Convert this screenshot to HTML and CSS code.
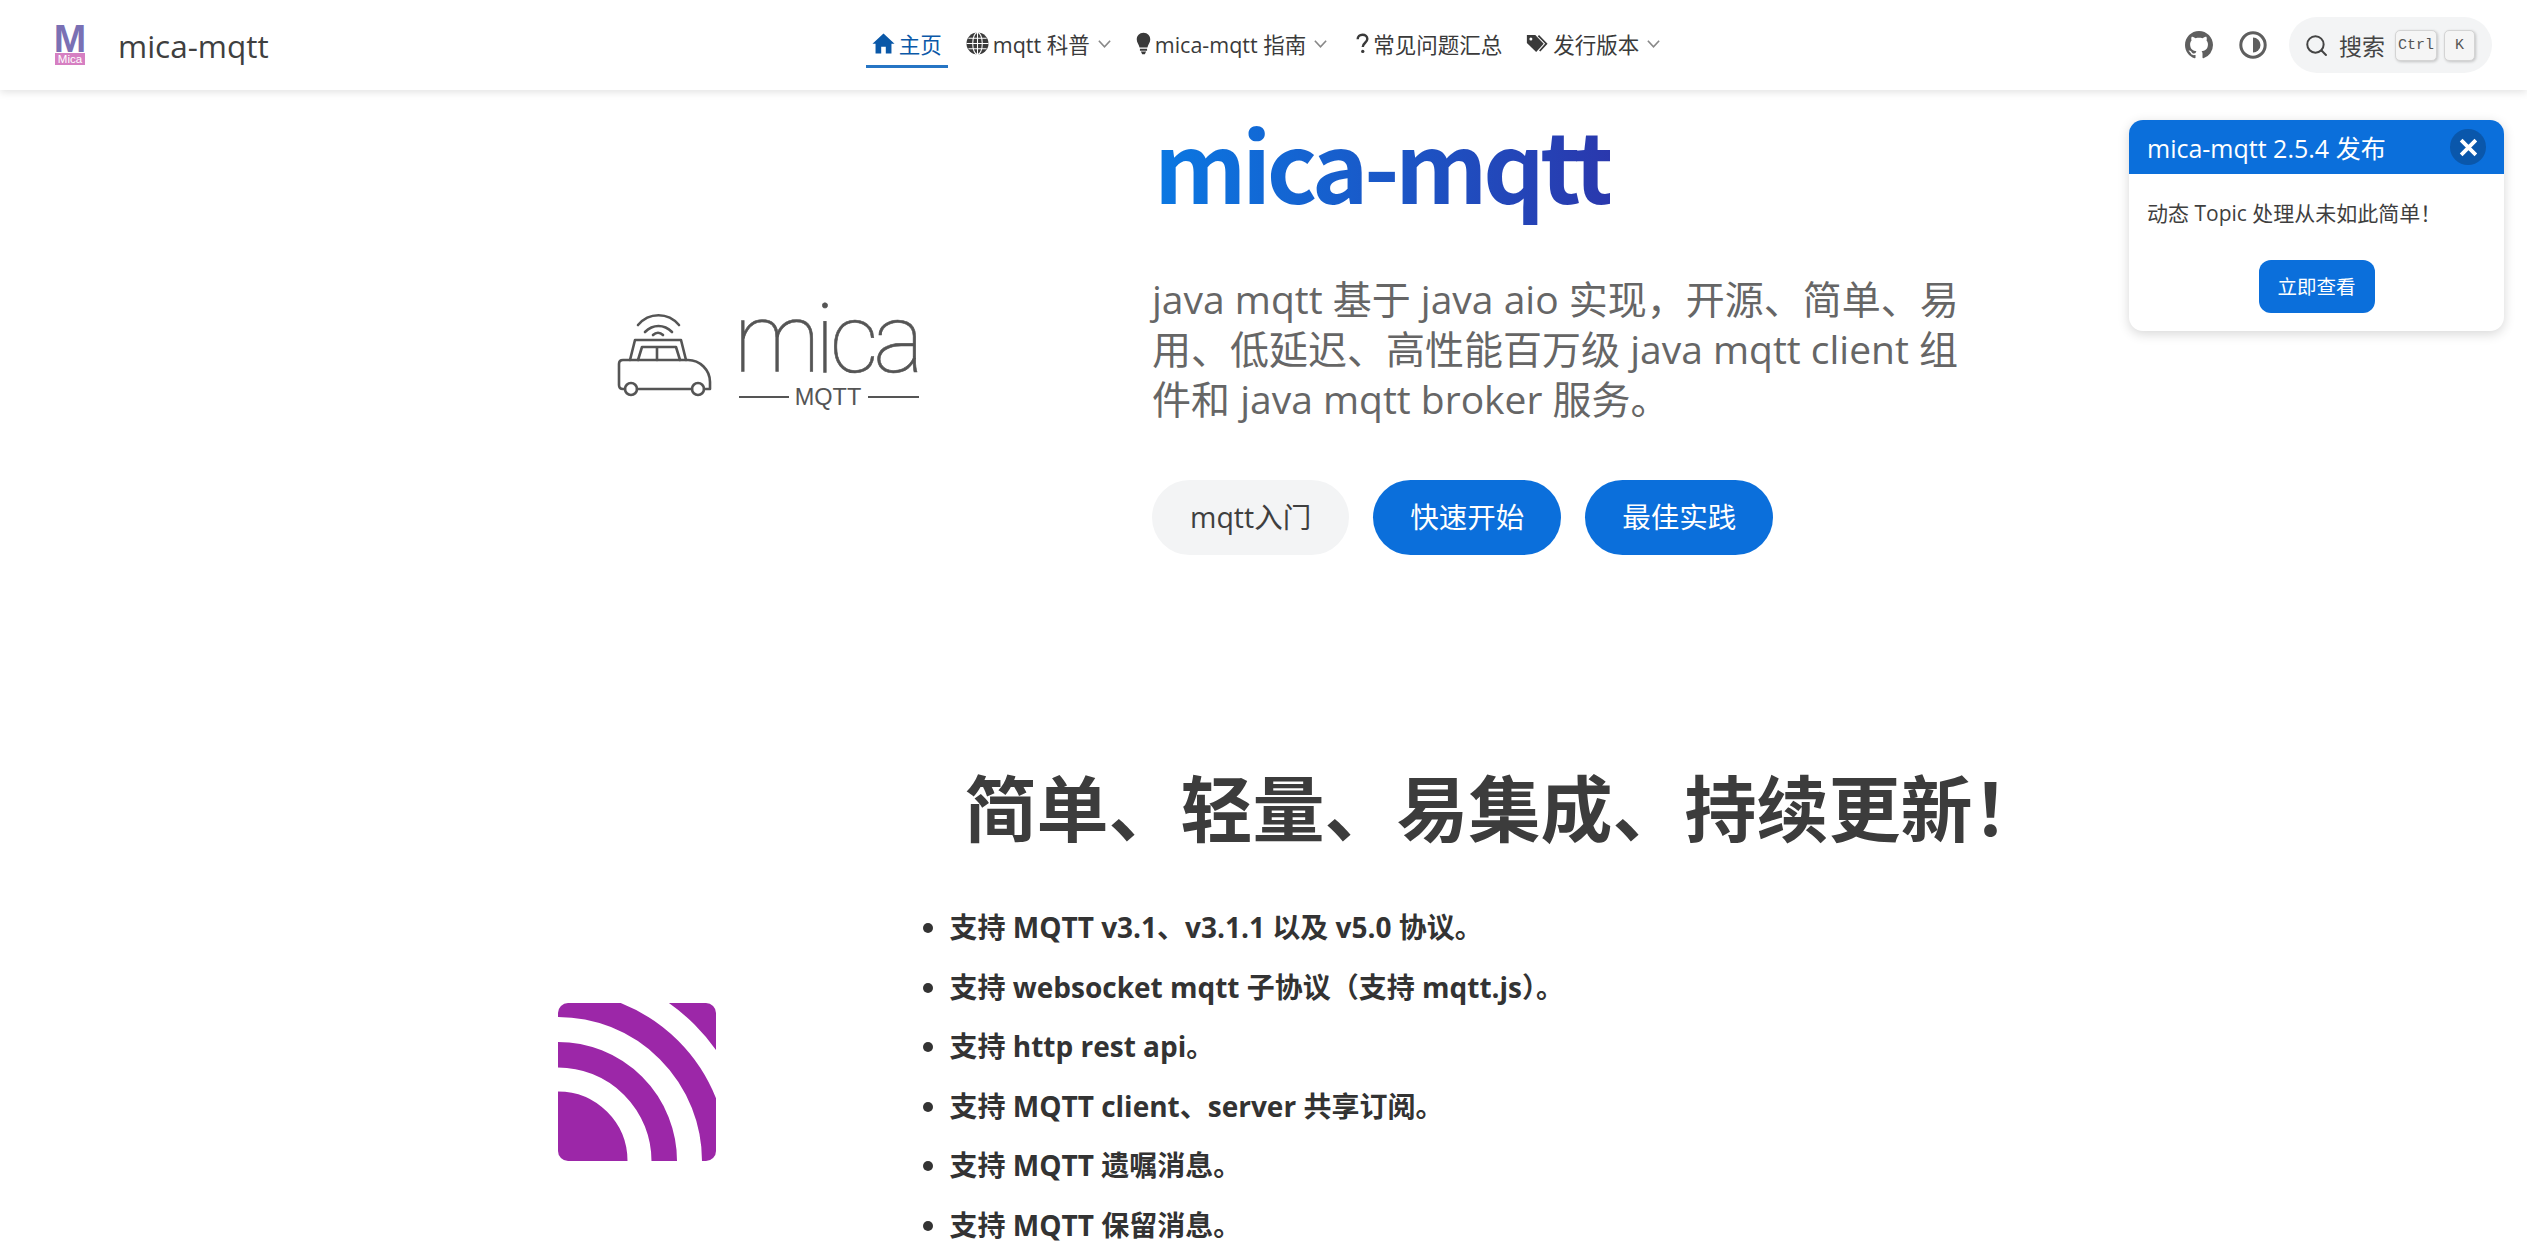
FILE: index.html
```html
<!DOCTYPE html>
<html lang="zh">
<head>
    <meta charset="UTF-8">
    <meta name="viewport" content="width=device-width, initial-scale=1.0">
    <title>mica-mqtt</title>
    <link rel="stylesheet" href="styles.css">
</head>
<body>
    <header class="navbar">
        <a class="brand">
            <span class="brand-logo"><span class="brand-m">M</span><span class="brand-mica">Mica</span></span>
            <span class="brand-name">mica-mqtt</span>
        </a>
        <nav class="nav">
            <a class="nav-item active">
                <svg class="nav-icon" viewBox="0 0 24 24"><path fill="currentColor" d="M12 1.500 0.500 12.200h3.200V22.500h5.900v-7h4.800v7h5.900V12.200h3.200z"/></svg>主页
            </a>
            <a class="nav-item">
                <svg class="nav-icon" viewBox="0 0 24 24"><circle cx="12" cy="12" r="11.500" fill="currentColor"/><g fill="none" stroke="#fff" stroke-width="1.100"><ellipse cx="12" cy="12" rx="5" ry="11.500"/><path d="M12 .5v23M.5 12h23M2.500 6.600h19M2.500 17.400h19"/></g></svg>mqtt 科普<svg class="chevron" viewBox="0 0 12 12"><path d="M1.500 3.800 6 8.600l4.500-4.800"/></svg>
            </a>
            <a class="nav-item nav-item-wide">
                <svg class="nav-icon bulb" viewBox="0 0 16 24"><path fill="currentColor" d="M8 .5C3.600.5.800 3.700.8 7.600c0 3.400 2.400 5.400 3 8.600h8.400c.6-3.200 3-5.200 3-8.600C15.200 3.700 12.400.5 8 .5zM4.200 17.600h7.600v2H4.200zM5.200 20.600h5.600L9.400 23.500H6.600z"/></svg>mica-mqtt 指南<svg class="chevron" viewBox="0 0 12 12"><path d="M1.500 3.800 6 8.600l4.500-4.800"/></svg>
            </a>
            <a class="nav-item">
                <svg class="nav-icon help" viewBox="0 0 14 24"><path fill="none" stroke="currentColor" stroke-width="2.600" d="M1.800 7.500C1.800 4.300 4 2.500 7 2.500s5.200 1.800 5.200 4.600c0 4-4.900 4.200-4.900 8.600"/><circle cx="7.300" cy="20.500" r="1.800" fill="currentColor"/></svg>常见问题汇总
            </a>
            <a class="nav-item">
                <svg class="nav-icon" viewBox="0 0 26 24"><path fill="currentColor" d="M1 2.500h9.500L20 12.200 11.500 21.500 1 11.500z"/><path fill="none" stroke="currentColor" stroke-width="2" d="M14 3l9 9.200-7.500 8.300"/><circle cx="5.500" cy="6.800" r="1.700" fill="#fff"/></svg>发行版本<svg class="chevron" viewBox="0 0 12 12"><path d="M1.500 3.800 6 8.600l4.500-4.800"/></svg>
            </a>
        </nav>
        <div class="nav-tools">
            <svg class="tool-icon" viewBox="0 0 16 16"><path fill="currentColor" d="M8 0C3.580 0 0 3.580 0 8c0 3.540 2.290 6.530 5.470 7.590.4.070.55-.17.55-.38 0-.19-.01-.82-.01-1.490-2.010.37-2.530-.49-2.690-.94-.09-.23-.48-.94-.82-1.130-.28-.15-.68-.52-.01-.53.630-.01 1.080.58 1.230.82.720 1.210 1.870.87 2.330.66.070-.52.280-.87.510-1.070-1.780-.2-3.640-.89-3.640-3.950 0-.87.310-1.590.82-2.150-.08-.2-.36-1.020.08-2.120 0 0 .67-.21 2.200.82.640-.18 1.320-.27 2-.27s1.360.09 2 .27c1.530-1.040 2.200-.82 2.200-.82.440 1.100.16 1.920.08 2.120.51.560.82 1.270.82 2.150 0 3.070-1.870 3.750-3.650 3.950.29.250.54.730.54 1.480 0 1.070-.01 1.930-.01 2.200 0 .21.150.46.550.38A8.010 8.010 0 0 0 16 8c0-4.420-3.580-8-8-8z"/></svg>
            <svg class="tool-icon" viewBox="0 0 28 28"><circle cx="14" cy="14" r="12.200" fill="none" stroke="currentColor" stroke-width="3"/><path fill="currentColor" d="M14 6.500a7.500 7.500 0 0 1 0 15z"/></svg>
            <div class="search">
                <svg class="search-icon" viewBox="0 0 20 20"><circle cx="9" cy="9" r="7.800" fill="none" stroke="currentColor" stroke-width="1.900"/><path stroke="currentColor" stroke-width="1.900" stroke-linecap="round" d="M14.800 14.800 19 19"/></svg>
                <span class="search-label">搜索</span>
                <kbd class="key key-ctrl">Ctrl</kbd>
                <kbd class="key key-k">K</kbd>
            </div>
        </div>
    </header>

    <aside class="notice">
        <div class="notice-head">
            <span>mica-mqtt 2.5.4 发布</span>
            <span class="notice-close"><svg viewBox="0 0 20 20"><path d="M3 3l14 14M17 3 3 17"/></svg></span>
        </div>
        <div class="notice-body">
            <p>动态 Topic 处理从未如此简单！</p>
            <a class="notice-btn">立即查看</a>
        </div>
    </aside>

    <main>
        <section class="hero">
            <svg class="hero-logo" viewBox="0 -20 340 150">
                <g fill="none" stroke="#555" stroke-width="2.600" stroke-linecap="round" stroke-linejoin="round">
                    <path d="M25 99h-2q-4 0-4-4V74q0-4 4-4h65c12 0 22 10 22 22v7h-6M37 99h55"/>
                    <circle cx="31" cy="99" r="6"/>
                    <circle cx="98" cy="99" r="6"/>
                    <path d="M30 70l5-20h46l5 20M38 70l4-13h34l4 13M57 57v13"/>
                    <path d="M38 35c11-13 30-13 41 0M45 42c8-8 19-8 27 0M53 45c3-3 7-3 10 0"/>
                </g>
                <text class="logo-word" x="134" y="82" textLength="190">mica</text>
                <path d="M139 107h50M268 107h51" stroke="#555" stroke-width="1.800"/>
                <text class="logo-sub" x="228" y="115">MQTT</text>
            </svg>
            <div class="hero-text">
                <h1 class="hero-title">mica-mqtt</h1>
                <p class="hero-desc">java mqtt 基于 java aio 实现，开源、简单、易用、低延迟、高性能百万级 java mqtt client 组件和 java mqtt broker 服务。</p>
                <div class="hero-actions">
                    <a class="btn btn-plain">mqtt入门</a>
                    <a class="btn btn-primary">快速开始</a>
                    <a class="btn btn-primary">最佳实践</a>
                </div>
            </div>
        </section>

        <section class="feature">
            <svg class="feature-icon" viewBox="0 0 158 158">
                <defs><clipPath id="rounded"><rect width="158" height="158" rx="10"/></clipPath></defs>
                <g clip-path="url(#rounded)">
                    <rect width="158" height="158" fill="#9c27a8"/>
                    <g fill="none" stroke="#fff">
                        <circle cx="0" cy="158" r="81.500" stroke-width="24"/>
                        <circle cx="0" cy="158" r="131.500" stroke-width="25"/>
                        <circle cx="0" cy="158" r="181.500" stroke-width="23"/>
                    </g>
                </g>
            </svg>
            <div class="feature-text">
                <h2 class="feature-title">简单、轻量、易集成、持续更新！</h2>
                <ul class="feature-list">
                    <li>支持 MQTT v3.1、v3.1.1 以及 v5.0 协议。</li>
                    <li>支持 websocket mqtt 子协议（支持 mqtt.js）。</li>
                    <li>支持 http rest api。</li>
                    <li>支持 MQTT client、server 共享订阅。</li>
                    <li>支持 MQTT 遗嘱消息。</li>
                    <li>支持 MQTT 保留消息。</li>
                </ul>
            </div>
        </section>
    </main>
</body>
</html>
```

FILE: styles.css
```css
* {
    box-sizing: border-box;
}
html, body {
    height: 100%;
    overflow: hidden;
}
body {
    margin: 0;
    background: #fff;
    color: #3a3a3a;
    font-family: "Open Sans", "Noto Sans CJK SC", sans-serif;
}
.navbar {
    display: grid;
    grid-template-columns: 1fr auto 1fr;
    align-items: center;
    height: 90px;
    padding: 0 35px 0 55px;
    background: #fff;
    box-shadow: 0 2px 8px rgba(0, 0, 0, 0.12);
}
.brand {
    display: flex;
    align-items: center;
    gap: 33px;
}
.brand-logo {
    display: flex;
    flex-direction: column;
    align-items: center;
    width: 30px;
    height: 40px;
    font-family: "Liberation Sans", sans-serif;
}
.brand-m {
    height: 28px;
    color: #7a70b4;
    font-size: 39px;
    font-weight: 700;
    line-height: 28px;
}
.brand-mica {
    width: 30px;
    height: 12px;
    background: #d67fc2;
    color: #fff;
    font-size: 11.5px;
    line-height: 12px;
    text-align: center;
}
.brand-name {
    font-size: 31.5px;
    color: #3f3f3f;
}
.nav {
    display: flex;
    align-items: center;
    gap: 12px;
    margin-right: 14px;
}
.nav-item {
    display: flex;
    align-items: center;
    gap: 4px;
    height: 46px;
    padding: 0 6px;
    font-size: 21.5px;
    color: #3a3a3a;
    white-space: nowrap;
    border-bottom: 3px solid transparent;
}
.nav-item-wide {
    margin-right: 4px;
}
.nav-item.active {
    color: #0a58a8;
    border-bottom-color: #2675c4;
}
.nav-icon {
    width: 23px;
    height: 23px;
}
.nav-icon.bulb {
    width: 15px;
}
.nav-icon.help {
    width: 13px;
}
.chevron {
    width: 15px;
    height: 15px;
    margin-left: 3px;
    fill: none;
    stroke: #888;
    stroke-width: 1.3;
}
.nav-tools {
    display: flex;
    align-items: center;
    justify-content: flex-end;
    gap: 26px;
    color: #5f5f5f;
}
.tool-icon {
    width: 28px;
    height: 28px;
}
.search {
    display: flex;
    align-items: center;
    width: 203px;
    height: 56px;
    margin-left: -4px;
    padding-left: 17px;
    background: #f3f4f5;
    border-radius: 28px;
    color: #444;
}
.search-icon {
    width: 21px;
    height: 21px;
}
.search-label {
    margin-left: 12px;
    font-size: 23px;
}
.key {
    display: block;
    height: 31px;
    border: 1px solid #d4d4d4;
    border-radius: 5px;
    background: #f5f5f5;
    box-shadow: 1px 1px 3px rgba(0, 0, 0, 0.2);
    color: #555;
    font-family: "Liberation Mono", monospace;
    font-size: 15px;
    line-height: 29px;
    text-align: center;
}
.key-ctrl {
    width: 42px;
    margin-left: 10px;
}
.key-k {
    width: 31px;
    margin-left: 7px;
}
.notice {
    position: absolute;
    top: 120px;
    right: 23px;
    width: 375px;
    height: 211px;
    border-radius: 14px;
    background: #fff;
    box-shadow: 0 3px 12px rgba(0, 0, 0, 0.16);
    overflow: hidden;
}
.notice-head {
    display: flex;
    align-items: center;
    justify-content: space-between;
    height: 54px;
    padding: 0 18px;
    background: #0b6fdb;
    color: #fff;
    font-size: 25px;
}
.notice-close {
    display: flex;
    align-items: center;
    justify-content: center;
    width: 36px;
    height: 36px;
    border-radius: 50%;
    background: #0a57ab;
}
.notice-close svg {
    width: 21px;
    height: 21px;
    fill: none;
    stroke: #fff;
    stroke-width: 3.6;
}
.notice-body {
    display: flex;
    flex-direction: column;
    align-items: center;
    padding: 24px 18px 0;
}
.notice-body p {
    align-self: flex-start;
    margin: 0 0 32px;
    font-size: 21px;
    line-height: 30px;
    color: #3f3f3f;
}
.notice-btn {
    width: 116px;
    height: 53px;
    background: #0b6fdb;
    border-radius: 12px;
    color: #fff;
    font-size: 19.5px;
    line-height: 53px;
    text-align: center;
}
.hero {
    display: grid;
    grid-template-columns: 592px 815px;
    justify-content: center;
    align-items: start;
}
.hero-logo {
    width: 340px;
    height: 150px;
    margin: 180px 0 0 40px;
}
.logo-word {
    font-family: Roboto, sans-serif;
    font-size: 96px;
    font-weight: 100;
    fill: #555;
    stroke: #555;
    stroke-width: 0.6;
}
.logo-sub {
    font-family: "Liberation Sans", sans-serif;
    font-size: 23.5px;
    text-anchor: middle;
    fill: #555;
}
.hero-text {
    padding-top: 8px;
}
.hero-title {
    display: inline-block;
    margin: 0 0 46px 2px;
    font-family: "Noto Sans CJK SC", sans-serif;
    font-size: 96px;
    font-weight: 700;
    letter-spacing: -4.5px;
    line-height: 130px;
    background: linear-gradient(90deg, #0a78e2, #2a38ad);
    -webkit-background-clip: text;
    background-clip: text;
    color: transparent;
}
.hero-desc {
    margin: 0 0 56px;
    font-size: 39px;
    line-height: 50px;
    color: #666;
}
.hero-actions {
    display: flex;
    gap: 24px;
}
.btn {
    display: block;
    height: 75px;
    padding: 0 37px;
    border-radius: 38px;
    font-size: 28.5px;
    line-height: 75px;
}
.btn-plain {
    padding: 0 38px;
    background: #f3f4f5;
    color: #3f3f3f;
}
.btn-primary {
    background: #0b6fdb;
    color: #fff;
}
.feature {
    display: grid;
    grid-template-columns: 446px 1132px;
    justify-content: center;
    align-items: start;
    margin-top: 205px;
}
.feature-icon {
    width: 158px;
    height: 158px;
    margin: 243px 0 0 83px;
}
.feature-title {
    margin: 0 0 42px;
    padding-left: 36px;
    font-size: 72px;
    line-height: 96px;
    font-weight: 700;
    text-align: center;
    color: #3c3c3c;
}
.feature-list {
    margin: 0;
    padding: 0 0 0 29px;
    font-size: 28px;
    font-weight: 700;
    color: #333;
}
.feature-list li {
    height: 59.6px;
    line-height: 59.6px;
}
```
